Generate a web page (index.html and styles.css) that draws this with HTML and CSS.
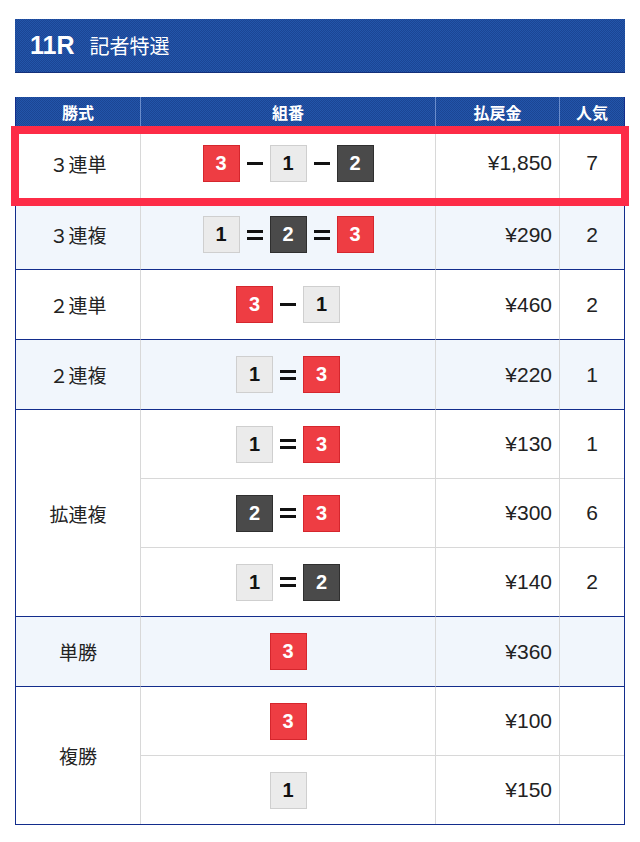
FILE: index.html
```html
<!DOCTYPE html>
<html lang="ja">
<head>
    <meta charset="UTF-8">
    <meta name="viewport" content="width=device-width, initial-scale=1.0">
    <title>11R 記者特選</title>
    <link rel="stylesheet" href="styles.css">
</head>
<body>

    <!-- Race title -->
    <div class="race-title">
        <span class="race-no">11R</span>
        <span class="race-name">記者特選</span>
    </div>

    <!-- Payout table -->
    <div class="result">
        <table class="payout">
            <thead>
                <tr>
                    <th class="col-type">勝式</th>
                    <th class="col-combo">組番</th>
                    <th class="col-pay">払戻金</th>
                    <th class="col-pop">人気</th>
                </tr>
            </thead>
            <tbody class="lead">
                <tr>
                    <td class="type">３連単</td>
                    <td class="combo">
                        <span class="boats"><span class="boat b3">3</span><span class="dash"></span><span class="boat b1">1</span><span class="dash"></span><span class="boat b2">2</span></span>
                    </td>
                    <td class="pay">¥1,850</td>
                    <td class="pop">7</td>
                </tr>
            </tbody>
            <tbody class="alt">
                <tr>
                    <td class="type">３連複</td>
                    <td class="combo">
                        <span class="boats"><span class="boat b1">1</span><span class="eq"></span><span class="boat b2">2</span><span class="eq"></span><span class="boat b3">3</span></span>
                    </td>
                    <td class="pay">¥290</td>
                    <td class="pop">2</td>
                </tr>
            </tbody>
            <tbody>
                <tr>
                    <td class="type">２連単</td>
                    <td class="combo">
                        <span class="boats"><span class="boat b3">3</span><span class="dash"></span><span class="boat b1">1</span></span>
                    </td>
                    <td class="pay">¥460</td>
                    <td class="pop">2</td>
                </tr>
            </tbody>
            <tbody class="alt">
                <tr>
                    <td class="type">２連複</td>
                    <td class="combo">
                        <span class="boats"><span class="boat b1">1</span><span class="eq"></span><span class="boat b3">3</span></span>
                    </td>
                    <td class="pay">¥220</td>
                    <td class="pop">1</td>
                </tr>
            </tbody>
            <tbody class="multi">
                <tr>
                    <td class="type" rowspan="3">拡連複</td>
                    <td class="combo">
                        <span class="boats"><span class="boat b1">1</span><span class="eq"></span><span class="boat b3">3</span></span>
                    </td>
                    <td class="pay">¥130</td>
                    <td class="pop">1</td>
                </tr>
                <tr>
                    <td class="combo">
                        <span class="boats"><span class="boat b2">2</span><span class="eq"></span><span class="boat b3">3</span></span>
                    </td>
                    <td class="pay">¥300</td>
                    <td class="pop">6</td>
                </tr>
                <tr>
                    <td class="combo">
                        <span class="boats"><span class="boat b1">1</span><span class="eq"></span><span class="boat b2">2</span></span>
                    </td>
                    <td class="pay">¥140</td>
                    <td class="pop">2</td>
                </tr>
            </tbody>
            <tbody class="alt">
                <tr>
                    <td class="type">単勝</td>
                    <td class="combo">
                        <span class="boats"><span class="boat b3">3</span></span>
                    </td>
                    <td class="pay">¥360</td>
                    <td class="pop"></td>
                </tr>
            </tbody>
            <tbody class="multi">
                <tr>
                    <td class="type" rowspan="2">複勝</td>
                    <td class="combo">
                        <span class="boats"><span class="boat b3">3</span></span>
                    </td>
                    <td class="pay">¥100</td>
                    <td class="pop"></td>
                </tr>
                <tr>
                    <td class="combo">
                        <span class="boats"><span class="boat b1">1</span></span>
                    </td>
                    <td class="pay">¥150</td>
                    <td class="pop"></td>
                </tr>
            </tbody>
        </table>

        <!-- Highlight frame over the trifecta row -->
        <div class="highlight"></div>
    </div>

</body>
</html>
```

FILE: styles.css
```css
body {
    margin: 0;
    padding: 19px 15px 0;
    background-color: #ffffff;
    color: #222222;
    font-family: "Liberation Sans", "Noto Sans CJK JP", sans-serif;
}

/* Blue fine-checked texture shared by the title bar and the table head */
.race-title,
.payout thead th {
    background-color: #1f4ea1;
    background-image: repeating-conic-gradient(#1b4594 0 25%, #2355aa 0 50%);
    background-size: 2px 2px;
}

.race-title {
    height: 54px;
    display: flex;
    align-items: center;
    gap: 15px;
    padding-left: 15px;
    color: #ffffff;
    box-sizing: border-box;
    border-bottom: 1px solid #14307a;
}

.race-no {
    font-size: 25px;
    font-weight: bold;
}

.race-name {
    font-family: "Noto Sans CJK JP", sans-serif;
    font-size: 20px;
}

.result {
    position: relative;
    margin-top: 24px;
}

.payout {
    width: 610px;
    border-collapse: separate;
    border-spacing: 0;
    border: 1px solid #132d8c;
    border-top: 0;
    table-layout: fixed;
}

.col-type { width: 124px; }
.col-combo { width: 295px; }
.col-pay { width: 124px; }
.col-pop { width: auto; }

.payout thead th {
    height: 29px;
    padding: 0;
    color: #ffffff;
    font-family: "Noto Sans CJK JP", sans-serif;
    font-size: 16px;
    font-weight: bold;
    border-left: 1px solid #6a8ccb;
    box-sizing: border-box;
}

.payout thead th:first-child {
    border-left: 0;
}

.payout td {
    height: 70px;
    padding: 0;
    box-sizing: border-box;
    border-left: 1px solid #d8d8d8;
    border-top: 1px solid #d8d8d8;
    text-align: center;
    font-size: 21px;
}

.payout tbody.lead td {
    height: 73px;
}

.payout tbody.multi td {
    height: 69px;
}

.payout tbody tr:first-child td {
    border-top-color: #132d8c;
}

.payout td.type {
    border-left: 0;
    font-family: "Noto Sans CJK JP", sans-serif;
    font-size: 19px;
}

.payout tbody.alt td {
    background-color: #f1f6fc;
}

.payout td.pay {
    text-align: right;
    padding-right: 7px;
}

/* Boat numbers */
.boats {
    display: inline-flex;
    align-items: center;
    gap: 7px;
    vertical-align: middle;
}

.boat {
    width: 37px;
    height: 37px;
    box-sizing: border-box;
    display: inline-flex;
    align-items: center;
    justify-content: center;
    font-size: 20px;
    font-weight: bold;
    border: 1px solid;
}

.b1 {
    background-color: #ebebeb;
    border-color: #cfcfcf;
    color: #111111;
}

.b2 {
    background-color: #4a4a4a;
    border-color: #2f2f2f;
    color: #ffffff;
}

.b3 {
    background-color: #ee3d43;
    border-color: #d5262d;
    color: #ffffff;
}

.dash {
    width: 16px;
    height: 3px;
    background-color: #111111;
}

.eq {
    width: 16px;
    height: 4px;
    border-top: 3px solid #111111;
    border-bottom: 3px solid #111111;
}

.highlight {
    position: absolute;
    top: 29px;
    left: -4px;
    width: 618px;
    height: 80px;
    box-sizing: border-box;
    border: 8px solid #fd2c47;
}
```
